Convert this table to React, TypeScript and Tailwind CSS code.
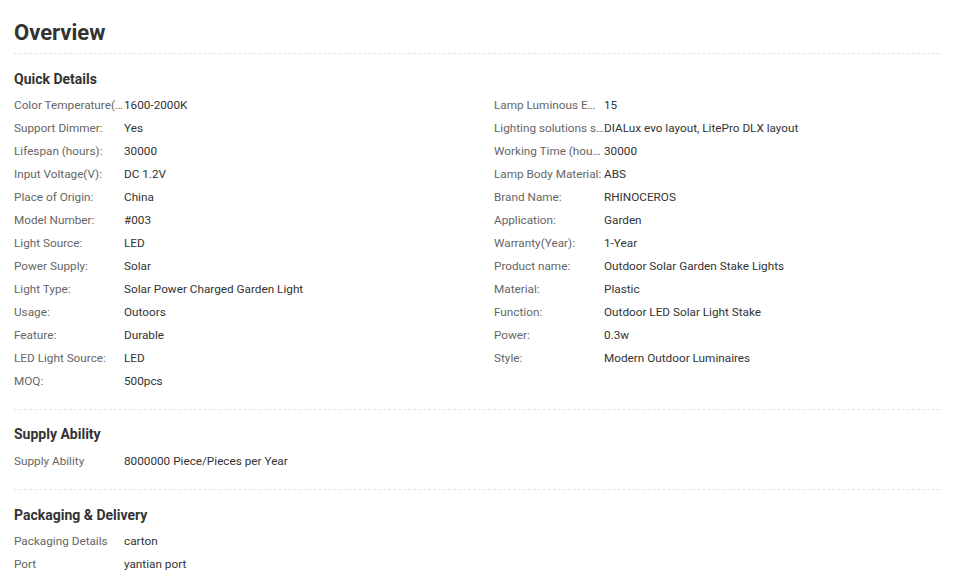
import React from "react";

type Row = [string, string];

const leftRows: Row[] = [
  ["Color Temperature(CCT):", "1600-2000K"],
  ["Support Dimmer:", "Yes"],
  ["Lifespan (hours):", "30000"],
  ["Input Voltage(V):", "DC 1.2V"],
  ["Place of Origin:", "China"],
  ["Model Number:", "#003"],
  ["Light Source:", "LED"],
  ["Power Supply:", "Solar"],
  ["Light Type:", "Solar Power Charged Garden Light"],
  ["Usage:", "Outoors"],
  ["Feature:", "Durable"],
  ["LED Light Source:", "LED"],
  ["MOQ:", "500pcs"],
];

const rightRows: Row[] = [
  ["Lamp Luminous Efficiency(lm/w):", "15"],
  ["Lighting solutions service:", "DIALux evo layout, LitePro DLX layout"],
  ["Working Time (hours):", "30000"],
  ["Lamp Body Material:", "ABS"],
  ["Brand Name:", "RHINOCEROS"],
  ["Application:", "Garden"],
  ["Warranty(Year):", "1-Year"],
  ["Product name:", "Outdoor Solar Garden Stake Lights"],
  ["Material:", "Plastic"],
  ["Function:", "Outdoor LED Solar Light Stake"],
  ["Power:", "0.3w"],
  ["Style:", "Modern Outdoor Luminaires"],
];

const DetailRow: React.FC<{ row: Row }> = ({ row }) => (
  <div className="flex h-[23px] items-center text-[11.75px] leading-[23px]">
    <span className="w-[110px] shrink-0 overflow-hidden text-ellipsis whitespace-nowrap text-[#666]">
      {row[0]}
    </span>
    <span className="whitespace-nowrap text-[#333]">{row[1]}</span>
  </div>
);

const Heading: React.FC<{ children: React.ReactNode }> = ({ children }) => (
  <h3 className="text-[14px] font-bold leading-[20px] text-[#333]">{children}</h3>
);

export default function App() {
  return (
    <div
      className="min-h-screen bg-white px-[14px]"
      style={{ fontFamily: "Roboto, 'Liberation Sans', sans-serif" }}
    >
      <div className="w-[926px]">
        <div className="border-b border-dashed border-[#e3e3e3] pt-[18px] pb-[5px]">
          <h2 className="text-[22px] font-bold leading-[30px] text-[#333]">Overview</h2>
        </div>

        <div className="border-b border-dashed border-[#e3e3e3] pt-[15px] pb-[16px]">
          <Heading>Quick Details</Heading>
          <div className="mt-[5px] flex">
            <div className="flex w-[480px] flex-col">
              {leftRows.map((r) => (
                <DetailRow key={r[0]} row={r} />
              ))}
            </div>
            <div className="flex flex-col">
              {rightRows.map((r) => (
                <DetailRow key={r[0]} row={r} />
              ))}
            </div>
          </div>
        </div>

        <div className="border-b border-dashed border-[#e3e3e3] pt-[14px] pb-[16px]">
          <Heading>Supply Ability</Heading>
          <div className="mt-[6px]">
            <DetailRow row={["Supply Ability", "8000000 Piece/Pieces per Year"]} />
          </div>
        </div>

        <div className="pt-[15px]">
          <Heading>Packaging &amp; Delivery</Heading>
          <div className="mt-[5px]">
            <DetailRow row={["Packaging Details", "carton"]} />
            <DetailRow row={["Port", "yantian port"]} />
          </div>
        </div>
      </div>
    </div>
  );
}
